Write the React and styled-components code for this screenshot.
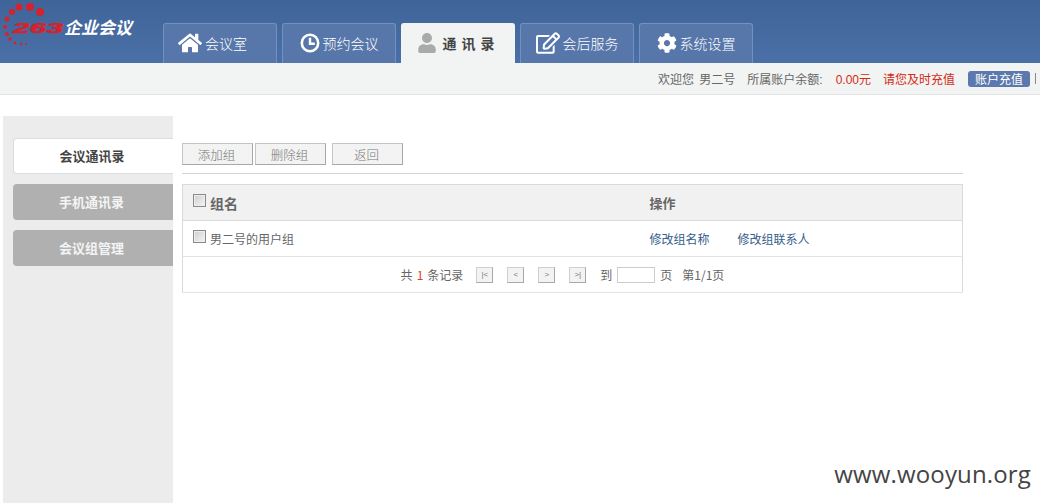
import React from "react";
import styled, { createGlobalStyle } from "styled-components";
import { FaHome, FaUser, FaRegEdit, FaCog } from "react-icons/fa";

const GlobalStyle = createGlobalStyle`
  html, body {
    margin: 0;
    padding: 0;
    background: #fff;
    overflow: hidden;
  }
  * {
    box-sizing: border-box;
  }
  body {
    font-family: "Liberation Sans", "Noto Sans CJK SC", sans-serif;
    font-size: 12px;
    color: #666;
  }
`;

const Page = styled.div`
  position: relative;
  display: flex;
  flex-direction: column;
  width: 1040px;
  height: 503px;
  overflow: hidden;
`;

const Header = styled.header`
  display: flex;
  align-items: flex-end;
  height: 63px;
  flex: none;
  background: linear-gradient(#3f6499, #4b70a7);
`;

const Logo = styled.div`
  position: relative;
  width: 163px;
  height: 63px;
  flex: none;
  display: flex;
  align-items: flex-start;
  padding: 19px 0 0 13px;
`;

const LogoDots = styled.svg`
  position: absolute;
  left: 0;
  top: 0;
`;

const LogoNumber = styled.span`
  display: block;
  width: 51px;
  font: italic bold 15px/18px "Liberation Sans", sans-serif;
  color: #d3232c;
  -webkit-text-stroke: 0.7px #d3232c;
  letter-spacing: 0.3px;
  transform: scaleX(1.95);
  transform-origin: left center;
`;

const LogoName = styled.span`
  margin-top: -1px;
  font: italic bold 17px/18px "Noto Sans CJK SC", sans-serif;
  color: #fff;
  white-space: nowrap;
`;

const Tabs = styled.nav`
  display: flex;
  gap: 5px;
`;

const Tab = styled.div`
  display: flex;
  align-items: center;
  justify-content: center;
  gap: ${(p) => (p.$active ? "6px" : "3px")};
  width: 114px;
  height: 40px;
  padding-bottom: 2px;
  padding-right: ${(p) => p.$shift || 0}px;
  border: 1px solid ${(p) => (p.$active ? "#f2f3f3" : "#7391bd")};
  border-bottom: none;
  border-radius: 3px 3px 0 0;
  background: ${(p) => (p.$active ? "#f2f3f3" : "#5777aa")};
  color: ${(p) => (p.$active ? "#444" : "#fff")};
  font-size: 14px;
  font-weight: ${(p) => (p.$active ? "700" : "300")};
  letter-spacing: ${(p) => (p.$active ? "5px" : "0")};
  font-family: "Noto Sans CJK SC", sans-serif;

  svg {
    flex: none;
    color: ${(p) => (p.$active ? "#aaa" : "#fff")};
  }
`;

const SubBar = styled.div`
  display: flex;
  align-items: center;
  justify-content: flex-end;
  height: 32px;
  flex: none;
  padding: 0 4px 0 0;
  background: #f2f3f3;
  border-bottom: 1px solid #e3e3e3;
  font-family: "Liberation Sans", "Noto Sans CJK SC", sans-serif;
  font-size: 12px;
  color: #666;
  white-space: nowrap;
`;

const Info = styled.span`
  margin-right: ${(p) => p.$gap}px;
  color: ${(p) => (p.$red ? "#d42a14" : "#666")};
  word-spacing: 2px;
`;

const RechargeButton = styled.span`
  display: flex;
  align-items: center;
  justify-content: center;
  width: 62px;
  height: 16px;
  margin-right: 5px;
  border-radius: 3px;
  background: #5b79ad;
  color: #fff;
  font-size: 12px;
`;

const Divider = styled.span`
  width: 1px;
  height: 11px;
  background: #888;
`;

const Content = styled.div`
  display: flex;
  flex: 1;
  min-height: 0;
  padding: 21px 0 0 3px;
`;

const Sidebar = styled.aside`
  display: flex;
  flex-direction: column;
  gap: 10px;
  width: 170px;
  flex: none;
  padding: 22px 0 0 10px;
  background: #ececec;
`;

const SideItem = styled.div`
  display: flex;
  align-items: center;
  justify-content: center;
  height: 36px;
  padding: 0 3px 2px 0;
  border: ${(p) => (p.$active ? "1px solid #dcdcdc" : "none")};
  border-right: none;
  border-radius: 4px 0 0 4px;
  background: ${(p) => (p.$active ? "#fff" : "#b0b0b0")};
  color: ${(p) => (p.$active ? "#444" : "#f4f4f4")};
  font-family: "Noto Sans CJK SC", sans-serif;
  font-size: 13px;
  font-weight: 700;
`;

const Main = styled.main`
  width: 781px;
  margin-left: 9px;
  padding-top: 27px;
  font-family: "Noto Sans CJK SC", sans-serif;
`;

const Toolbar = styled.div`
  display: flex;
  height: 31px;
  border-bottom: 1px solid #d4d4d4;
`;

const ToolButton = styled.button`
  width: 71px;
  height: 22px;
  margin-left: ${(p) => p.$gap || 0}px;
  padding: 0 2px 0 0;
  border: 1px solid #c4c4c4;
  border-right-color: #a8a8a8;
  border-bottom-color: #a8a8a8;
  background: #f3f3f3;
  color: #777;
  font: inherit;
  font-size: 12.5px;
  font-weight: 300;
`;

const Table = styled.table`
  width: 781px;
  margin-top: 10px;
  border: 1px solid #dadada;
  border-collapse: collapse;
  table-layout: fixed;
`;

const HeadCell = styled.th`
  height: 36px;
  padding: 0 0 0 10px;
  background: #f1f1f1;
  border-bottom: 1px solid #dadada;
  text-align: left;
  font-size: ${(p) => p.$size || 13}px;
  font-weight: 700;
  color: #666;
`;

const Cell = styled.td`
  height: 36px;
  padding: 0 0 0 10px;
  border-bottom: 1px solid #e2e2e2;
  color: #666;
`;

const CheckLabel = styled.div`
  display: flex;
  align-items: center;
  gap: 4px;
`;

const CheckBox = styled.span`
  width: 13px;
  height: 13px;
  margin-top: -4px;
  flex: none;
  border: 1px solid #8a8a8a;
  background: linear-gradient(135deg, #cfcfcf, #f4f4f4);
  box-shadow: inset 0 0 0 1px #eee;
`;

const ActionLink = styled.a`
  margin-right: ${(p) => p.$gap || 0}px;
  color: #35608c;
  text-decoration: none;
`;

const Pager = styled.div`
  display: flex;
  align-items: center;
  justify-content: center;
  padding-right: 30px;
  white-space: nowrap;
  color: #666;
`;

const PagerCount = styled.span`
  margin: 0 4px;
  color: #e0401a;
`;

const PagerButton = styled.span`
  display: flex;
  align-items: center;
  justify-content: center;
  width: 17px;
  height: 16px;
  margin-left: ${(p) => p.$gap}px;
  border: 1px solid #cfcfcf;
  border-right-color: #a8a8a8;
  border-bottom-color: #a8a8a8;
  background: #f3f3f3;
  color: #777;
  font: 8px/1 "Liberation Sans", sans-serif;
`;

const PagerText = styled.span`
  margin-left: ${(p) => p.$gap}px;
`;

const PagerInput = styled.span`
  width: 38px;
  height: 16px;
  margin-left: 5px;
  border: 1px solid #ccc;
  background: #fff;
`;

const Watermark = styled.div`
  position: absolute;
  right: 9px;
  bottom: 14px;
  font: 24px/30px "Open Sans", sans-serif;
  letter-spacing: 0.15px;
  color: #444;
`;

const ClockIcon = ({ size }) => (
  <svg width={size} height={size} viewBox="0 0 20 20" fill="none" stroke="currentColor">
    <circle cx="10" cy="10" r="8.2" strokeWidth="2.6" />
    <path d="M10 4.8V10.8H14.8" strokeWidth="2.4" />
  </svg>
);

const tabs = [
  { label: "会议室", Icon: FaHome, size: 24, shift: 15 },
  { label: "预约会议", Icon: ClockIcon, size: 20 },
  { label: "通讯录", Icon: FaUser, size: 20, active: true },
  { label: "会后服务", Icon: FaRegEdit, size: 24 },
  { label: "系统设置", Icon: FaCog, size: 20 },
];

const dots = [
  [40, 12, 4],
  [30, 7, 4],
  [19, 7, 3.5],
  [12, 12, 3],
  [7, 19, 2.5],
  [5, 27, 2],
  [7, 34, 2],
  [10, 39, 1.8],
  [15, 43, 1.5],
  [21, 44, 1.2],
  [26, 44, 1],
];

const App = () => (
  <Page>
    <GlobalStyle />
    <Header>
      <Logo>
        <LogoDots width="50" height="50" viewBox="0 0 50 50">
          {dots.map(([cx, cy, r]) => (
            <circle key={`${cx}-${cy}`} cx={cx} cy={cy} r={r} fill="#d3232c" />
          ))}
        </LogoDots>
        <LogoNumber>263</LogoNumber>
        <LogoName>企业会议</LogoName>
      </Logo>
      <Tabs>
        {tabs.map(({ label, Icon, size, active, shift }) => (
          <Tab key={label} $active={active} $shift={shift}>
            <Icon size={size} />
            <span>{label}</span>
          </Tab>
        ))}
      </Tabs>
    </Header>
    <SubBar>
      <Info $gap={12}>欢迎您 男二号</Info>
      <Info $gap={13}>所属账户余额:</Info>
      <Info $gap={12} $red>0.00元</Info>
      <Info $gap={13} $red>请您及时充值</Info>
      <RechargeButton>账户充值</RechargeButton>
      <Divider />
    </SubBar>
    <Content>
      <Sidebar>
        <SideItem $active>会议通讯录</SideItem>
        <SideItem>手机通讯录</SideItem>
        <SideItem>会议组管理</SideItem>
      </Sidebar>
      <Main>
        <Toolbar>
          <ToolButton>添加组</ToolButton>
          <ToolButton $gap={2}>删除组</ToolButton>
          <ToolButton $gap={6}>返回</ToolButton>
        </Toolbar>
        <Table>
          <colgroup>
            <col style={{ width: 457 }} />
            <col />
          </colgroup>
          <tbody>
            <tr>
              <HeadCell $size={14}>
                <CheckLabel>
                  <CheckBox />
                  组名
                </CheckLabel>
              </HeadCell>
              <HeadCell>操作</HeadCell>
            </tr>
            <tr>
              <Cell>
                <CheckLabel>
                  <CheckBox />
                  男二号的用户组
                </CheckLabel>
              </Cell>
              <Cell>
                <ActionLink $gap={28}>修改组名称</ActionLink>
                <ActionLink>修改组联系人</ActionLink>
              </Cell>
            </tr>
            <tr>
              <Cell colSpan={2}>
                <Pager>
                  共<PagerCount>1</PagerCount>条记录
                  <PagerButton $gap={13}>|&lt;</PagerButton>
                  <PagerButton $gap={14}>&lt;</PagerButton>
                  <PagerButton $gap={14}>&gt;</PagerButton>
                  <PagerButton $gap={14}>&gt;|</PagerButton>
                  <PagerText $gap={14}>到</PagerText>
                  <PagerInput />
                  <PagerText $gap={5}>页</PagerText>
                  <PagerText $gap={10}>第1/1页</PagerText>
                </Pager>
              </Cell>
            </tr>
          </tbody>
        </Table>
      </Main>
    </Content>
    <Watermark>www.wooyun.org</Watermark>
  </Page>
);

export default App;
